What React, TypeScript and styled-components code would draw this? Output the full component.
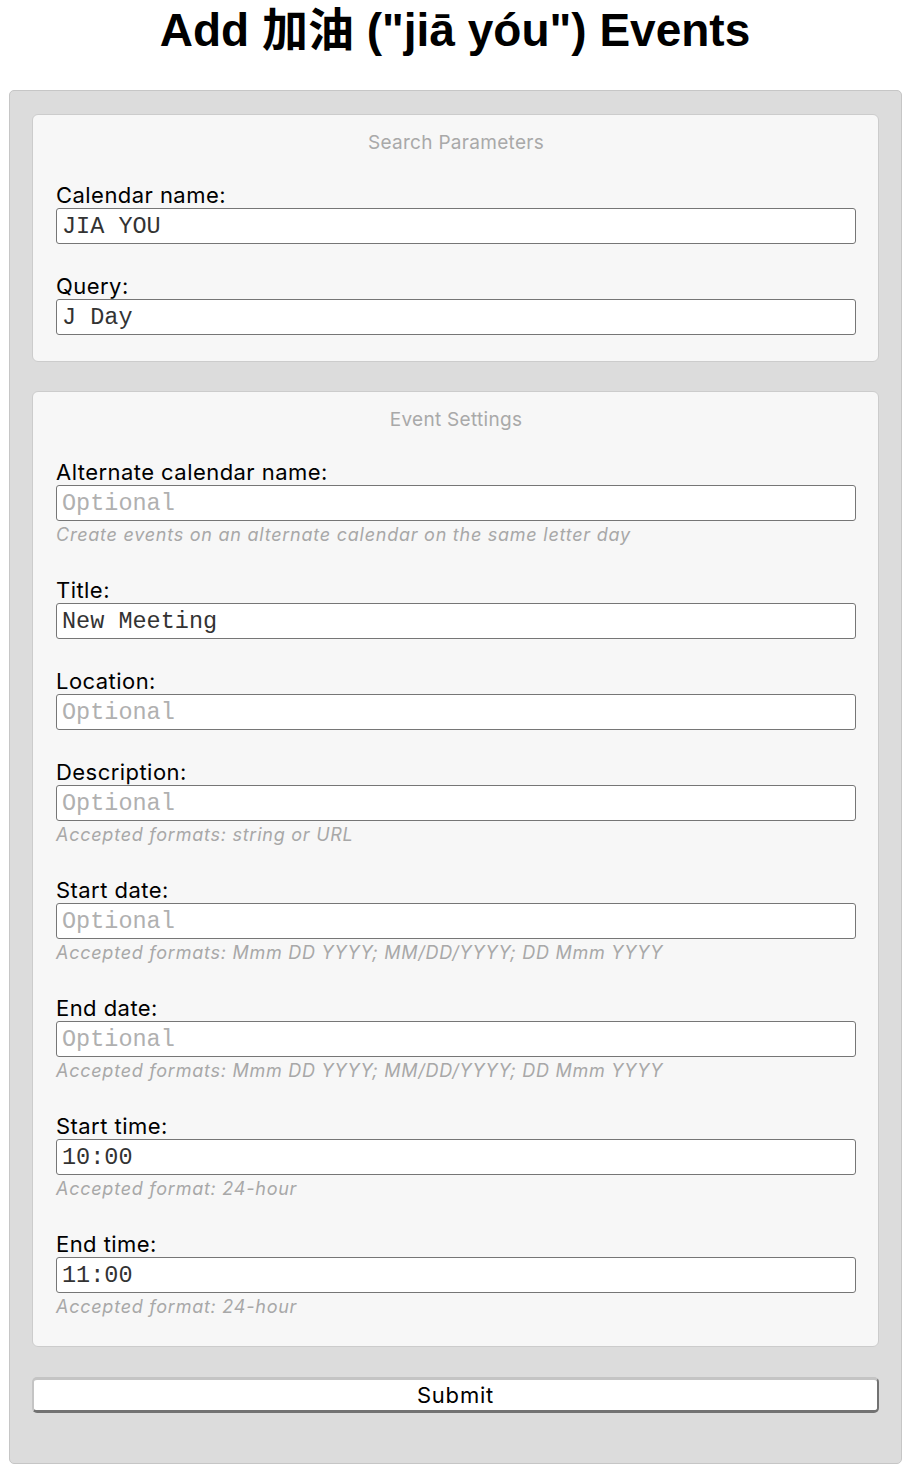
import React from "react";
import styled, { createGlobalStyle } from "styled-components";

const Global = createGlobalStyle`
  html, body { margin: 0; padding: 0; background: #ffffff; }
  body { font-family: Inter, "Noto Sans", sans-serif; color: #000; }
  * { box-sizing: border-box; }
`;

const Title = styled.h1`
  margin: 2px 0 32px;
  text-align: center;
  font-family: "Liberation Sans", Arial, "Noto Sans CJK SC", sans-serif;
  font-weight: 700;
  font-size: 46px;
  line-height: 56px;
  color: #000;
`;

const Outer = styled.form`
  margin: 0 8px 0 9px;
  background: #dcdcdc;
  border: 1px solid #c6c6c6;
  border-radius: 5px;
  padding: 23px 22px 50px 22px;
  display: flex;
  flex-direction: column;
`;

const Fieldset = styled.section`
  background: #f7f7f7;
  border: 1px solid #cccccc;
  border-radius: 6px;
  padding: 16px 22px 26px 23px;
  display: flex;
  flex-direction: column;
  & + & {
    margin-top: 29px;
  }
`;

const Legend = styled.div`
  text-align: center;
  color: #a9a9a9;
  font-size: 19px;
  line-height: 24px;
  letter-spacing: 0.3px;
  margin-bottom: 1px;
`;

const Group = styled.div`
  display: flex;
  flex-direction: column;
  margin-top: 26px;
  & + & {
    margin-top: 29px;
  }
`;

const Label = styled.label`
  font-size: 22px;
  line-height: 26px;
  letter-spacing: 0.45px;
  color: #000;
`;

const Input = styled.input`
  height: 36px;
  width: 100%;
  border: 1px solid #767676;
  border-radius: 3px;
  background: #fff;
  padding: 0 5px;
  font-family: "Liberation Mono", "Courier New", monospace;
  font-size: 23.5px;
  color: #333333;
  outline: none;
  &::placeholder {
    color: #b0b0b0;
  }
`;

const Hint = styled.div`
  font-size: 18px;
  line-height: 27px;
  letter-spacing: 0.75px;
  font-style: italic;
  color: #a8a8a8;
`;

const Submit = styled.button`
  margin-top: 30px;
  height: 36px;
  width: 100%;
  background: #fff;
  border-style: solid;
  border-width: 3px 2px 3px 2px;
  border-color: #c4c4c4 #727272 #727272 #c4c4c4;
  border-radius: 5px;
  font-family: Inter, "Noto Sans", sans-serif;
  font-size: 22px;
  line-height: 26px;
  letter-spacing: 0.8px;
  color: #000;
  padding: 0;
`;

type Field = { label: string; value?: string; placeholder?: string; hint?: string };

const searchFields: Field[] = [
  { label: "Calendar name:", value: "JIA YOU" },
  { label: "Query:", value: "J Day" },
];

const fmt = "Accepted formats: Mmm DD YYYY; MM/DD/YYYY; DD Mmm YYYY";

const eventFields: Field[] = [
  {
    label: "Alternate calendar name:",
    placeholder: "Optional",
    hint: "Create events on an alternate calendar on the same letter day",
  },
  { label: "Title:", value: "New Meeting" },
  { label: "Location:", placeholder: "Optional" },
  { label: "Description:", placeholder: "Optional", hint: "Accepted formats: string or URL" },
  { label: "Start date:", placeholder: "Optional", hint: fmt },
  { label: "End date:", placeholder: "Optional", hint: fmt },
  { label: "Start time:", value: "10:00", hint: "Accepted format: 24-hour" },
  { label: "End time:", value: "11:00", hint: "Accepted format: 24-hour" },
];

const FieldGroup = ({ f, id }: { f: Field; id: string }) => (
  <Group>
    <Label htmlFor={id}>{f.label}</Label>
    <Input id={id} defaultValue={f.value} placeholder={f.placeholder} />
    {f.hint && <Hint>{f.hint}</Hint>}
  </Group>
);

export default function App() {
  return (
    <>
      <Global />
      <Title>Add 加油 ("jiā yóu") Events</Title>
      <Outer onSubmit={(e) => e.preventDefault()}>
        <Fieldset>
          <Legend>Search Parameters</Legend>
          {searchFields.map((f, i) => (
            <FieldGroup key={i} f={f} id={`s${i}`} />
          ))}
        </Fieldset>
        <Fieldset>
          <Legend>Event Settings</Legend>
          {eventFields.map((f, i) => (
            <FieldGroup key={i} f={f} id={`e${i}`} />
          ))}
        </Fieldset>
        <Submit type="submit">Submit</Submit>
      </Outer>
    </>
  );
}
